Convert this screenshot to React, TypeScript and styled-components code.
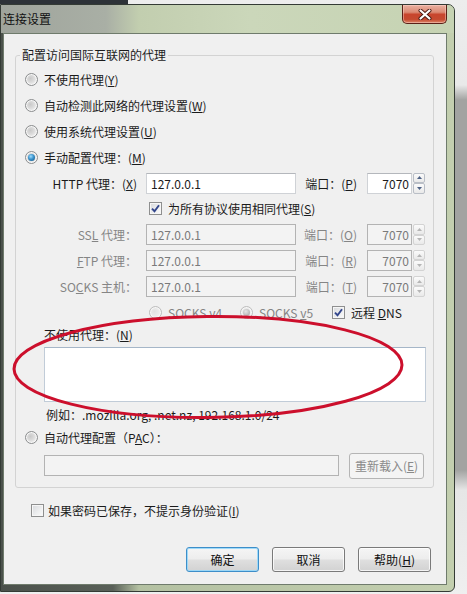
import * as React from 'react'
import styled, { createGlobalStyle } from 'styled-components'

const GlobalStyle = createGlobalStyle`
  html, body {
    margin: 0;
    padding: 0;
  }
  body {
    font-family: "Noto Sans CJK SC", "Noto Sans", sans-serif;
    font-size: 12px;
    color: #1b1b1b;
  }
`

const Screen = styled.div`
  box-sizing: border-box;
  width: 467px;
  height: 594px;
  padding-top: 4px;
  overflow: hidden;
  background:
    linear-gradient(#2d3238, #2d3238) 0 0 / 128px 4px no-repeat,
    linear-gradient(to bottom, #ededed 0, #e9e9e9 85px, #a2a3a1 100px, #a2a3a1 470px, #e6e6e6 490px, #efefef 100%);
`

const Window = styled.div`
  box-sizing: border-box;
  width: 455px;
  height: 588px;
  display: flex;
  flex-direction: column;
  border: 1px solid #343b35;
  border-radius: 0 7px 6px 0;
  background: linear-gradient(to right, #4b514b 0, #596058 112px, #b4c1a2 138px, #c3cfaf 100%);
  overflow: hidden;
`

const TitleBar = styled.div`
  flex: none;
  height: 28px;
  display: flex;
  justify-content: space-between;
  align-items: flex-start;
  background: linear-gradient(to right, #9fa49c 0, #a9afa5 105px, #c2ceaf 138px, #cbd7ba 55%, #c6d3b3 100%);
`

const Title = styled.div`
  padding-left: 2px;
  line-height: 28px;
  color: #111;
`

const CloseButton = styled.div`
  box-sizing: border-box;
  width: 45px;
  height: 19px;
  margin-right: 7px;
  border: 1px solid #5a2017;
  border-top: none;
  border-radius: 0 0 5px 5px;
  background: linear-gradient(#eab0a0 0, #db8a74 40%, #c8452d 52%, #c54a30 80%, #dc8668 100%);
  box-shadow: inset 0 0 0 1px rgba(255, 220, 210, 0.45);
  display: flex;
  align-items: center;
  justify-content: center;
`

const Client = styled.div`
  position: relative;
  box-sizing: border-box;
  height: 552px;
  margin: 0 7px 0 2px;
  padding: 13px 12px 0 11px;
  border: 1px solid #6f7b6c;
  background: #f0f0f0;
  display: flex;
  flex-direction: column;
`

const Group = styled.fieldset`
  margin: 0;
  padding: 4px 0 8px 0;
  min-width: 0;
  border: 1px solid #d3d3d3;
  border-radius: 3px;
`

const GroupTitle = styled.legend`
  margin-left: 4px;
  padding: 0 2px;
  line-height: 16px;
`

const GroupBody = styled.div`
  padding-left: 9px;
  display: flex;
  flex-direction: column;
`

const Row = styled.div<{ $h?: number; $indent?: number; $top?: number }>`
  display: flex;
  align-items: center;
  height: ${p => p.$h ?? 25.8}px;
  padding-left: ${p => p.$indent ?? 0}px;
  margin-top: ${p => p.$top ?? 0}px;
`

const Text = styled.span<{ $off?: boolean; $gap?: number }>`
  margin-left: ${p => p.$gap ?? 6}px;
  white-space: nowrap;
  color: ${p => (p.$off ? '#858585' : '#1b1b1b')};
`

const Key = styled.span`
  text-decoration: underline;
`

const Radio = styled.span<{ $on?: boolean; $off?: boolean }>`
  box-sizing: border-box;
  flex: none;
  width: 13px;
  height: 13px;
  border-radius: 50%;
  border: 1px solid ${p => (p.$off ? '#bdbdbd' : '#8b8d8e')};
  background: ${p =>
    p.$off
      ? 'radial-gradient(circle at 40% 40%, #e2e2e2 0, #ececec 50%, #f8f8f8 100%)'
      : 'radial-gradient(circle at 40% 40%, #c9c9c9 0, #dedede 45%, #f6f6f6 80%, #ffffff 100%)'};
  box-shadow: inset 0 0 0 1px #f7f7f7;
  display: flex;
  align-items: center;
  justify-content: center;

  &::after {
    content: '';
    display: ${p => (p.$on ? 'block' : 'none')};
    width: 7px;
    height: 7px;
    border-radius: 50%;
    background: ${p =>
      p.$off
        ? 'radial-gradient(circle at 40% 35%, #e6e6e6, #b2b2b2 75%)'
        : 'radial-gradient(circle at 40% 35%, #9ddcff 0, #3b93cc 45%, #0f4f7e 100%)'};
  }
`

const Check = styled.span<{ $off?: boolean }>`
  box-sizing: border-box;
  flex: none;
  width: 13px;
  height: 13px;
  border: 1px solid ${p => (p.$off ? '#bdbdbd' : '#8e8f8f')};
  background: linear-gradient(135deg, #d7d9dc 0, #eeeff0 60%, #fbfbfb 100%);
  box-shadow: inset 0 0 0 1px #f6f6f6;
  display: flex;
  align-items: center;
  justify-content: center;
`

const FieldLabel = styled.span<{ $off?: boolean }>`
  width: 112px;
  text-align: right;
  white-space: nowrap;
  color: ${p => (p.$off ? '#858585' : '#1b1b1b')};
`

const PortLabel = styled(FieldLabel)`
  width: 53px;
  margin-left: 8px;
`

const TextBox = styled.input<{ $w: number; $right?: boolean }>`
  box-sizing: border-box;
  width: ${p => p.$w}px;
  height: 21px;
  margin: 0;
  padding: 0 ${p => (p.$right ? 2 : 0)}px 0 ${p => (p.$right ? 0 : 4)}px;
  font: inherit;
  text-align: ${p => (p.$right ? 'right' : 'left')};
  color: #1b1b1b;
  background: #ffffff;
  border: 1px solid #cfd2d6;
  border-top-color: #b4b7bc;
  border-radius: 0;
  outline: none;

  &:disabled {
    color: #7a7a7a;
    background: #f3f3f3;
    border-color: #b3b3b3;
  }
`

const PortBox = styled.div`
  display: flex;
  align-items: center;
  margin-left: 10px;
`

const Spinner = styled.div`
  display: flex;
  flex-direction: column;
  width: 12px;
  height: 21px;
  margin-left: 1px;
`

const SpinHalf = styled.div<{ $off?: boolean }>`
  flex: 1;
  box-sizing: border-box;
  border: 1px solid ${p => (p.$off ? '#d3d3d3' : '#b9bec6')};
  border-radius: 2px;
  background: linear-gradient(#fbfbfb, #e9e9e9);
  display: flex;
  align-items: center;
  justify-content: center;
`

const Option = styled.div<{ $w?: number }>`
  display: flex;
  align-items: center;
  width: ${p => (p.$w ? `${p.$w}px` : 'auto')};
`

const NoProxyBox = styled.textarea`
  box-sizing: border-box;
  width: 382px;
  height: 55px;
  margin: 2px 0 0 19px;
  padding: 2px 4px;
  resize: none;
  font: inherit;
  background: #ffffff;
  border: 1px solid #c1ccd8;
  border-top-color: #a5b6c8;
  outline: none;
`

const Hint = styled.div`
  height: 26px;
  line-height: 26px;
  padding-left: 21px;
  white-space: nowrap;
`

const SmallButton = styled.button`
  box-sizing: border-box;
  width: 75px;
  height: 26px;
  margin-left: 10px;
  padding: 0;
  font: inherit;
  color: #8a8a8a;
  background: #f4f4f4;
  border: 1px solid #b5b5b5;
  border-radius: 3px;
`

const FooterCheck = styled.div`
  display: flex;
  align-items: center;
  height: 16px;
  margin-top: 15px;
  padding-left: 16px;
`

const Buttons = styled.div`
  display: flex;
  justify-content: flex-end;
  gap: 13px;
  margin-top: 28px;
  padding-right: 3px;
`

const Button = styled.button<{ $primary?: boolean }>`
  box-sizing: border-box;
  width: 73px;
  height: 25px;
  padding: 0;
  font: inherit;
  color: #111;
  border: 1px solid ${p => (p.$primary ? '#3d8ec9' : '#7a7a7a')};
  border-radius: 3px;
  background: linear-gradient(#f5f5f5 0, #ededed 48%, #dfdfdf 52%, #d2d2d2 100%);
  box-shadow: inset 0 0 0 1px ${p => (p.$primary ? 'rgba(150, 215, 250, 0.9)' : 'rgba(255, 255, 255, 0.75)')};
`

const Scribble = styled.svg`
  position: absolute;
  left: 8px;
  top: 278px;
  pointer-events: none;
`

const CheckMark = () => (
  <svg width="9" height="9" viewBox="0 0 9 9">
    <path d="M1 4.6 L3.5 7.2 L8 1.2" fill="none" stroke="#33468c" strokeWidth="1.9" />
  </svg>
)

const Arrow = ({ up, off }: { up?: boolean; off?: boolean }) => (
  <svg width="5" height="3" viewBox="0 0 5 3">
    <path d={up ? 'M0 3 L2.5 0 L5 3 Z' : 'M0 0 L2.5 3 L5 0 Z'} fill={off ? '#b5b5b5' : '#4d6185'} />
  </svg>
)

const Port = ({ off }: { off?: boolean }) => (
  <PortBox>
    <TextBox $w={45} $right defaultValue="7070" disabled={off} readOnly />
    <Spinner>
      <SpinHalf $off={off}>
        <Arrow up off={off} />
      </SpinHalf>
      <SpinHalf $off={off}>
        <Arrow off={off} />
      </SpinHalf>
    </Spinner>
  </PortBox>
)

interface ProxyRowProps {
  label: React.ReactNode
  port: React.ReactNode
  off?: boolean
}

const ProxyRow = ({ label, port, off }: ProxyRowProps) => (
  <Row>
    <FieldLabel $off={off}>{label}</FieldLabel>
    <TextBox $w={150} defaultValue="127.0.0.1" disabled={off} readOnly style={{ marginLeft: 9 }} />
    <PortLabel $off={off}>{port}</PortLabel>
    <Port off={off} />
  </Row>
)

export default function App() {
  return (
    <Screen>
      <GlobalStyle />
      <Window>
        <TitleBar>
          <Title>连接设置</Title>
          <CloseButton>
            <svg width="14" height="11" viewBox="0 0 14 11">
              <path d="M2.5 1.5 L11.5 9.5 M11.5 1.5 L2.5 9.5" stroke="#4a1a12" strokeWidth="4" strokeLinecap="round" />
              <path d="M2.5 1.5 L11.5 9.5 M11.5 1.5 L2.5 9.5" stroke="#ffffff" strokeWidth="2.2" strokeLinecap="round" />
            </svg>
          </CloseButton>
        </TitleBar>
        <Client>
          <Group>
            <GroupTitle>配置访问国际互联网的代理</GroupTitle>
            <GroupBody>
              <Row>
                <Radio />
                <Text>不使用代理(<Key>Y</Key>)</Text>
              </Row>
              <Row>
                <Radio />
                <Text>自动检测此网络的代理设置(<Key>W</Key>)</Text>
              </Row>
              <Row>
                <Radio />
                <Text>使用系统代理设置(<Key>U</Key>)</Text>
              </Row>
              <Row>
                <Radio $on />
                <Text>手动配置代理：(<Key>M</Key>)</Text>
              </Row>
              <ProxyRow label={<>HTTP 代理：(<Key>X</Key>)</>} port={<>端口：(<Key>P</Key>)</>} />
              <Row $indent={124}>
                <Check>
                  <CheckMark />
                </Check>
                <Text>为所有协议使用相同代理(<Key>S</Key>)</Text>
              </Row>
              <ProxyRow off label={<>SS<Key>L</Key> 代理：</>} port={<>端口：(<Key>O</Key>)</>} />
              <ProxyRow off label={<><Key>F</Key>TP 代理：</>} port={<>端口：(<Key>R</Key>)</>} />
              <ProxyRow off label={<>SO<Key>C</Key>KS 主机：</>} port={<>端口：(<Key>T</Key>)</>} />
              <Row $indent={124}>
                <Option $w={91}>
                  <Radio $off />
                  <Text $off>SOCKS v4</Text>
                </Option>
                <Option $w={92}>
                  <Radio $off $on />
                  <Text $off>SOCKS <Key>v</Key>5</Text>
                </Option>
                <Option>
                  <Check>
                    <CheckMark />
                  </Check>
                  <Text>远程 <Key>D</Key>NS</Text>
                </Option>
              </Row>
              <Row $h={20} $indent={19}>
                不使用代理：(<Key>N</Key>)
              </Row>
              <NoProxyBox readOnly />
              <Hint>例如：.mozilla.org, .net.nz, 192.168.1.0/24</Hint>
              <Row $h={20}>
                <Radio />
                <Text>自动代理配置（P<Key>A</Key>C）：</Text>
              </Row>
              <Row $h={26} $top={5} $indent={19}>
                <TextBox $w={295} disabled readOnly />
                <SmallButton disabled>
                  重新载入(<Key>E</Key>)
                </SmallButton>
              </Row>
            </GroupBody>
          </Group>
          <FooterCheck>
            <Check />
            <Text $gap={4}>如果密码已保存，不提示身份验证(<Key>I</Key>)</Text>
          </FooterCheck>
          <Buttons>
            <Button $primary>确定</Button>
            <Button>取消</Button>
            <Button>
              帮助(<Key>H</Key>)
            </Button>
          </Buttons>
          <Scribble width="400" height="112" viewBox="0 0 400 112">
            <ellipse cx="196" cy="55" rx="194" ry="50.5" fill="none" stroke="#cc0f2c" strokeWidth="3" transform="rotate(-0.6 196 55)" />
          </Scribble>
        </Client>
      </Window>
    </Screen>
  )
}
